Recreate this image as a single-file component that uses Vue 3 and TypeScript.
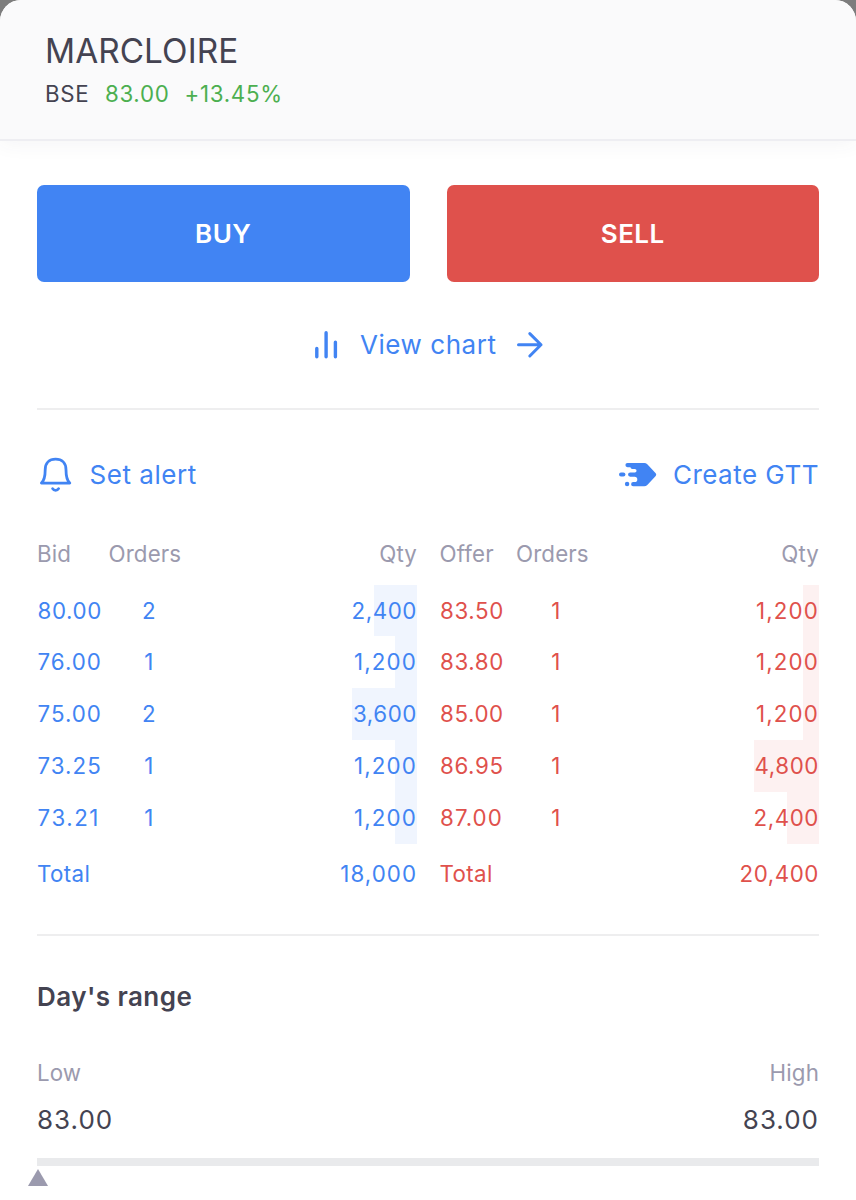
<script setup lang="ts">
interface DepthRow {
  price: string
  orders: number
  qty: number
}

interface DepthSide {
  kind: 'bid' | 'offer'
  label: string
  rows: DepthRow[]
  total: number
}

const sides: DepthSide[] = [
  {
    kind: 'bid',
    label: 'Bid',
    rows: [
      { price: '80.00', orders: 2, qty: 2400 },
      { price: '76.00', orders: 1, qty: 1200 },
      { price: '75.00', orders: 2, qty: 3600 },
      { price: '73.25', orders: 1, qty: 1200 },
      { price: '73.21', orders: 1, qty: 1200 },
    ],
    total: 18000,
  },
  {
    kind: 'offer',
    label: 'Offer',
    rows: [
      { price: '83.50', orders: 1, qty: 1200 },
      { price: '83.80', orders: 1, qty: 1200 },
      { price: '85.00', orders: 1, qty: 1200 },
      { price: '86.95', orders: 1, qty: 4800 },
      { price: '87.00', orders: 1, qty: 2400 },
    ],
    total: 20400,
  },
]

const BAR_MAX = 65

const format = (n: number): string => n.toLocaleString('en-US')

// Opens up figures with narrow digits so that prices keep an even column width.
const tracking = (text: string): string => {
  const ones = text.split('1').length - 1
  const sevens = text.split('7').length - 1
  return `${(0.58 + (ones * 2.8 + sevens * 2.1) / text.length).toFixed(2)}px`
}

const barWidth = (side: DepthSide, qty: number): string => {
  const peak = Math.max(...side.rows.map((r) => r.qty))
  return `${(qty / peak) * BAR_MAX}px`
}
</script>

<template>
  <main class="sheet">
    <header class="head">
      <h1 class="symbol">MARCLOIRE</h1>
      <div class="quote">
        <span class="exchange">BSE</span>
        <span class="up">83.00</span>
        <span class="up change">+13.45%</span>
      </div>
    </header>

    <div class="body">
      <div class="actions">
        <button class="btn buy" type="button">BUY</button>
        <button class="btn sell" type="button">SELL</button>
      </div>

      <div class="chart-link">
        <svg class="bars-icon" width="26" height="30" viewBox="0 0 26 30" fill="none" stroke="currentColor" stroke-width="3.4" stroke-linecap="round">
          <path d="M2.8 18.5V26.8M12.1 2.8V26.8M21.4 12.2V26.8" />
        </svg>
        <span class="link-text chart-text">View chart</span>
        <svg class="arrow-icon" width="28" height="28" viewBox="0 0 28 28" fill="none" stroke="currentColor" stroke-width="3" stroke-linecap="round" stroke-linejoin="round">
          <path d="M2.5 13.8H25M13.8 2.6L25 13.8L13.8 25" />
        </svg>
      </div>

      <hr class="rule" />

      <div class="tools">
        <div class="tool">
          <svg class="bell-icon" width="34" height="36" viewBox="0 0 34 36" fill="none" stroke="currentColor" stroke-width="2.8" stroke-linecap="round" stroke-linejoin="round">
            <path d="M2.4 26.1C5.2 23.6 6.2 19.5 6.2 12.8C6.2 6 10.2 2.2 16.6 2.2C23 2.2 27 6 27 12.8C27 19.5 28 23.6 30.8 26.1Z" />
            <path d="M13.6 31.6C15 34 18.2 34 19.6 31.6" />
          </svg>
          <span class="link-text">Set alert</span>
        </div>
        <div class="tool">
          <svg class="gtt-icon" width="38" height="24" viewBox="0 0 38 24" fill="currentColor">
            <path d="M8.5 0H25.2Q27 0 28.3 1.3L36.7 10.3Q37.8 11.6 36.7 12.9L28.3 22Q27 23.3 25.2 23.3H14.2A2.1 2.1 0 0 1 14.2 19.1H15.6A1.8 1.8 0 0 0 15.6 13.7H11.2A2.1 2.1 0 0 1 11.2 9.4H15.8A1.7 1.7 0 0 0 15.8 5.9H13.4Q11.6 5.9 11.4 4.2H8.5A2.1 2.1 0 0 1 8.5 0Z" />
            <rect x="0" y="9.5" width="6.4" height="4.1" rx="2" />
            <circle cx="8.1" cy="21" r="2.2" />
          </svg>
          <span class="link-text gtt-text">Create GTT</span>
        </div>
      </div>

      <div class="depth">
        <section v-for="side in sides" :key="side.kind" class="side" :class="side.kind">
          <div class="row labels">
            <span>{{ side.label }}</span>
            <span>Orders</span>
            <span class="qty">Qty</span>
          </div>
          <div v-for="row in side.rows" :key="row.price" class="row level">
            <span class="price" :style="{ letterSpacing: tracking(row.price) }">{{ row.price }}</span>
            <span class="orders">{{ row.orders }}</span>
            <span class="qty" :style="{ letterSpacing: tracking(format(row.qty)) }">{{ format(row.qty) }}</span>
            <i class="bar" :style="{ width: barWidth(side, row.qty) }"></i>
          </div>
          <div class="row total">
            <span>Total</span>
            <span></span>
            <span class="qty" :style="{ letterSpacing: tracking(format(side.total)) }">{{ format(side.total) }}</span>
          </div>
        </section>
      </div>

      <hr class="rule" />

      <section class="range">
        <h2 class="range-title">Day's range</h2>
        <div class="pair range-labels"><span>Low</span><span>High</span></div>
        <div class="pair range-values"><span>83.00</span><span>83.00</span></div>
        <div class="track"></div>
        <svg class="marker" width="20" height="17" viewBox="0 0 20 17" fill="#9b9aae">
          <path d="M10 0L20 17H0Z" />
        </svg>
      </section>
    </div>
  </main>
</template>

<style>
body {
  background: #7d7d7d;
}
</style>

<style scoped>
.sheet {
  height: 1200px;
  overflow: hidden;
  box-sizing: border-box;
  border-radius: 21px 21px 0 0;
  background: #fff;
  color: #444351;
  font-family: Inter, 'Liberation Sans', sans-serif;
  font-weight: 400;
}

.head {
  height: 140.5px;
  box-sizing: border-box;
  padding: 30px 45px 0;
  background: #fafafb;
  border-bottom: 2px solid #eeeef2;
  box-shadow: 0 2px 20px rgba(60, 60, 90, 0.06);
}

.symbol {
  margin: 0;
  font-size: 33.3px;
  line-height: 42px;
  font-weight: 400;
  letter-spacing: 0.08px;
}

.quote {
  display: flex;
  margin-top: 7.5px;
  font-size: 22.3px;
  line-height: 28px;
  letter-spacing: 0.7px;
}

.exchange {
  margin-right: 15.5px;
}

.up {
  color: #4caf50;
}

.change {
  margin-left: 15px;
}

.body {
  padding: 44.5px 37px 0;
}

.actions {
  display: grid;
  grid-template-columns: 1fr 1fr;
  gap: 37px;
}

.btn {
  height: 96.5px;
  padding: 0;
  border: 0;
  border-radius: 7px;
  color: #fff;
  font: 600 26px/97px Inter, 'Liberation Sans', sans-serif;
  letter-spacing: 0.5px;
}

.buy {
  background: #4184f3;
}

.sell {
  background: #df514c;
}

.chart-link {
  display: flex;
  align-items: center;
  height: 40px;
  margin-top: 43.5px;
  padding-left: 277px;
  color: #4184f3;
}

.link-text {
  font-size: 26px;
  line-height: 40px;
  letter-spacing: 0.55px;
  white-space: nowrap;
}

.chart-text {
  width: 137px;
  margin-left: 20px;
}

.gtt-text {
  letter-spacing: 0.48px;
}

.arrow-icon {
  margin-left: 19px;
}

.rule {
  height: 2px;
  margin: 42.5px 0 0;
  border: 0;
  background: #eeeeef;
}

.tools {
  display: flex;
  justify-content: space-between;
  height: 40px;
  margin-top: 45.5px;
  color: #4184f3;
}

.tool {
  display: flex;
  align-items: center;
}

.bell-icon {
  margin: 0 16.5px 0 2px;
}

.gtt-icon {
  margin-right: 16px;
}

.depth {
  display: grid;
  grid-template-columns: 380px 379.5px;
  justify-content: space-between;
  margin-top: 45px;
  font-size: 22.3px;
  letter-spacing: 0.4px;
}

.row {
  display: grid;
  grid-template-columns: 71.5px 81px 1fr;
  line-height: 28px;
}

.offer .row {
  grid-template-columns: 76.5px 80px 1fr;
}

.bid {
  color: #4184f3;
}

.offer {
  color: #df514c;
}

.labels {
  margin-bottom: 16.5px;
  color: #9b9aae;
  letter-spacing: 0.15px;
}

.level {
  position: relative;
  height: 51.9px;
  line-height: 51.9px;
}

.price {
  padding-left: 0.6px;
}

.orders {
  text-align: center;
}

.qty {
  text-align: right;
}

.level span {
  position: relative;
  z-index: 1;
}

.bar {
  position: absolute;
  top: 0;
  right: 0;
  bottom: 0;
  background: #f0f5fe;
}

.offer .bar {
  background: #fdf1f1;
}

.total {
  margin-top: 16px;
}

.depth + .rule {
  margin-top: 46px;
}

.range-title {
  margin: 41px 0 0;
  font-size: 26px;
  line-height: 40px;
  font-weight: 600;
  letter-spacing: 0.45px;
}

.pair {
  display: flex;
  justify-content: space-between;
}

.range-labels {
  margin-top: 42px;
  color: #9b9aae;
  font-size: 22.3px;
  line-height: 28px;
  letter-spacing: 0.15px;
}

.range-values {
  margin-top: 13px;
  font-size: 26px;
  line-height: 40px;
  letter-spacing: 1px;
}

.track {
  height: 7.5px;
  margin-top: 18.5px;
  background: #e9eaec;
}

.marker {
  display: block;
  margin: 3px 0 0 -9.5px;
}
</style>
